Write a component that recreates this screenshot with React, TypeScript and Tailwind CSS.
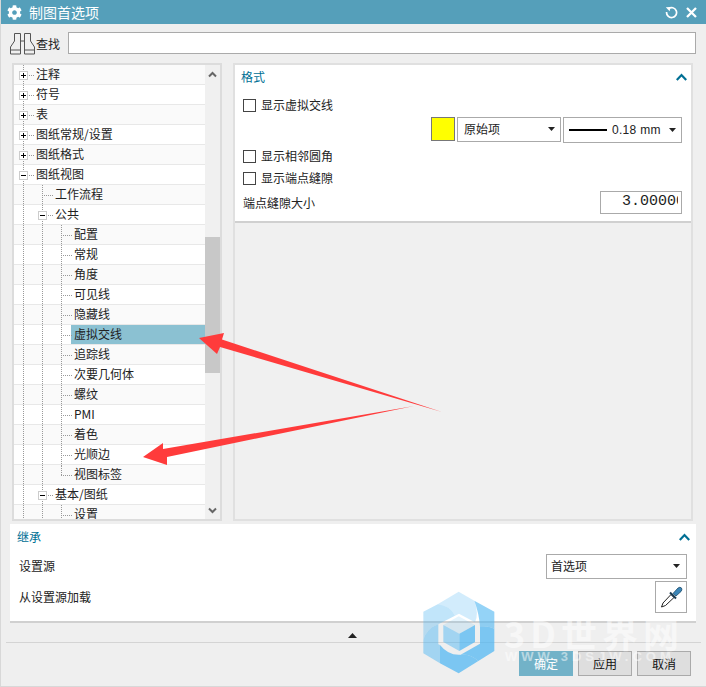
import { FaCog } from "react-icons/fa";

interface TreeRow {
  label: string;
  level: number;
  box?: "+" | "-";
  last?: boolean;
  selected?: boolean;
}

const rows: TreeRow[] = [
  { label: "注释", level: 0, box: "+" },
  { label: "符号", level: 0, box: "+" },
  { label: "表", level: 0, box: "+" },
  { label: "图纸常规/设置", level: 0, box: "+" },
  { label: "图纸格式", level: 0, box: "+" },
  { label: "图纸视图", level: 0, box: "-" },
  { label: "工作流程", level: 1 },
  { label: "公共", level: 1, box: "-" },
  { label: "配置", level: 2 },
  { label: "常规", level: 2 },
  { label: "角度", level: 2 },
  { label: "可见线", level: 2 },
  { label: "隐藏线", level: 2 },
  { label: "虚拟交线", level: 2, selected: true },
  { label: "追踪线", level: 2 },
  { label: "次要几何体", level: 2 },
  { label: "螺纹", level: 2 },
  { label: "PMI", level: 2 },
  { label: "着色", level: 2 },
  { label: "光顺边", level: 2 },
  { label: "视图标签", level: 2, last: true },
  { label: "基本/图纸", level: 1, box: "-" },
  { label: "设置", level: 2 },
];

function Guide({ active, row }: { active: boolean; row: TreeRow }) {
  return (
    <div className="relative h-full w-[19px] shrink-0">
      <div
        className={`ml-[9px] border-l border-dotted border-[#999] ${
          active && row.last ? "h-1/2" : "h-full"
        }`}
      />
      {active && (
        <div className="absolute left-[9px] top-[10px] w-[11px] border-t border-dotted border-[#999]" />
      )}
      {active && row.box && (
        <div className="absolute left-[5px] top-[6px] flex h-[9px] w-[9px] items-center justify-center border border-[#ccc] bg-white">
          <div className="relative h-px w-[5px] bg-black">
            {row.box === "+" && (
              <div className="absolute left-[2px] top-[-2px] h-[5px] w-px bg-black" />
            )}
          </div>
        </div>
      )}
    </div>
  );
}

function Tree() {
  return (
    <div className="flex h-[458px] w-[210px] shrink-0 border-2 border-[#dcdcdc] bg-white">
      <div className="w-[191px] overflow-hidden">
        {rows.map((row, i) => (
          <div
            key={i}
            className={`flex h-[20px] border-b border-[#e8e8e8] ${
              i % 2 === 0 ? "bg-[#fafafa]" : "bg-white"
            }`}
          >
            {Array.from({ length: row.level + 1 }).map((_, l) => (
              <Guide key={l} active={l === row.level} row={row} />
            ))}
            <div
              className={`flex h-full grow items-center pb-px pl-[3px] text-[12px] text-[#222] ${
                row.selected ? "bg-[#8bc1d2]" : ""
              }`}
            >
              {row.label}
            </div>
          </div>
        ))}
      </div>
      <div className="flex w-[15px] flex-col items-center bg-[#f0f0f0]">
        <svg width="9" height="7" viewBox="0 0 9 7" className="mt-[6px] shrink-0">
          <path d="M1 5.5 L4.5 2 L8 5.5" fill="none" stroke="#666" strokeWidth="2" />
        </svg>
        <div className="mt-[159px] h-[136px] w-full bg-[#c8c8c8]" />
        <svg width="9" height="7" viewBox="0 0 9 7" className="mt-[134px] shrink-0">
          <path d="M1 1.5 L4.5 5 L8 1.5" fill="none" stroke="#666" strokeWidth="2" />
        </svg>
      </div>
    </div>
  );
}

function Caret() {
  return (
    <svg width="7" height="4" viewBox="0 0 7 4" className="shrink-0">
      <path d="M0 0 H7 L3.5 4 Z" fill="#222" />
    </svg>
  );
}

function Chevron() {
  return (
    <svg width="11" height="8" viewBox="0 0 11 8">
      <path d="M0.8 7 L5.5 2 L10.2 7" fill="none" stroke="#006f94" strokeWidth="2.2" />
    </svg>
  );
}

function CheckRow({ label, className }: { label: string; className: string }) {
  return (
    <div className={`flex items-center gap-[5px] text-[12px] text-[#222] ${className}`}>
      <div className="h-[13px] w-[13px] border border-[#444] bg-white" />
      {label}
    </div>
  );
}

function Button({ label, primary }: { label: string; primary?: boolean }) {
  return (
    <div
      className={`flex h-[25px] w-[54px] items-center justify-center text-[12px] ${
        primary
          ? "bg-[#72b2c8] text-white"
          : "border border-[#aaa] bg-[#dedede] text-[#111]"
      }`}
    >
      {label}
    </div>
  );
}

function FormatPanel() {
  return (
    <div className="h-[458px] grow border-2 border-[#e0e0e0] bg-[#f0f0f0]">
      <div className="h-[158px] border-b-2 border-[#d0d0d0] bg-white pl-[8px] pr-[9px]">
        <div className="-ml-[2px] -mr-[5px] flex h-[24px] items-center justify-between text-[12px] text-[#006f94]">
          <span>格式</span>
          <Chevron />
        </div>
        <CheckRow label="显示虚拟交线" className="mt-[7px]" />
        <div className="mt-[3px] flex items-start justify-end">
          <div className="h-[24px] w-[24px] border border-[#777] bg-[#ffff00]" />
          <div className="ml-[2px] flex h-[25px] w-[104px] items-center justify-between border border-[#aaa] pb-px pl-[6px] pr-[5px] text-[12px] text-[#222]">
            原始项
            <Caret />
          </div>
          <div className="ml-[2px] flex h-[26px] w-[119px] items-center border border-[#aaa] pl-[5px] pr-[5px] text-[12px] text-[#222]">
            <div className="h-[2px] w-[38px] bg-black" />
            <span className="ml-[5px] grow font-['Liberation_Sans',sans-serif] tracking-[0.3px]">0.18 mm</span>
            <Caret />
          </div>
        </div>
        <CheckRow label="显示相邻圆角" className="mt-[4px]" />
        <CheckRow label="显示端点缝隙" className="mt-[4px]" />
        <div className="mt-[4px] flex items-center justify-between text-[12px] text-[#222]">
          端点缝隙大小
          <div className="flex h-[23px] w-[82px] items-center border border-[#aaa] font-['Liberation_Mono',monospace] text-[15px] text-[#222]">
            <div className="w-[77px] overflow-hidden pl-[21px]">
              <span className="whitespace-nowrap">3.00000</span>
            </div>
          </div>
        </div>
      </div>
    </div>
  );
}

function Watermark() {
  return (
    <div className="pointer-events-none absolute left-[414px] top-[585px] h-[95px] w-[276px]">
      <svg width="90" height="95" viewBox="0 0 270 285" className="absolute left-0 top-0">
        <path d="M68 58 L131 20 L178 47 Q192 85 180 112 L132 86 L120 92 Q105 62 68 58 Z" fill="#4db5f2" fillOpacity="0.25" />
        <path d="M178 47 L238 80 L238 132 Q222 122 195 124 Q192 85 178 47 Z" fill="#4db5f2" fillOpacity="0.6" />
        <path d="M238 132 L238 198 L190 228 Q165 205 137 209 L195 176 L195 124 Q222 122 238 132 Z" fill="#4db5f2" fillOpacity="0.72" />
        <path d="M190 228 L131 265 L75 235 L75 180 Q100 212 137 209 Q165 205 190 228 Z" fill="#4db5f2" fillOpacity="0.72" />
        <path d="M75 235 L25 205 L25 165 Q35 130 70 118 L70 178 L75 180 Z" fill="#4db5f2" fillOpacity="0.48" />
        <path d="M25 165 L25 80 L68 58 Q105 62 120 92 L70 118 Q35 130 25 165 Z" fill="#4db5f2" fillOpacity="0.35" />
        <path d="M85 120 L131 94 L180 120 L133 146 Z" fill="#4db5f2" fillOpacity="0.15" />
        <path d="M85 120 L133 146 V198 L85 171 Z" fill="#4db5f2" fillOpacity="0.48" />
        <path d="M180 120 L133 146 V198 L180 171 Z" fill="#4db5f2" fillOpacity="0.72" />
      </svg>
      <div className="absolute left-[89px] top-[29px] whitespace-nowrap text-[36px] font-bold leading-[36px] tracking-[5px] text-white/50">
        3D世界网
      </div>
      <div className="absolute left-[90px] top-[65px] whitespace-nowrap font-['Liberation_Sans',sans-serif] text-[13px] font-bold leading-[14px] tracking-[4px] text-white/50">
        WWW.3DSJW.COM
      </div>
    </div>
  );
}

export default function App() {
  return (
    <div
      className="relative flex h-[687px] w-[706px] flex-col overflow-hidden border-b border-l border-[#d8d8d8] bg-[#efefef] text-[#222]"
      style={{ fontFamily: '"Noto Sans CJK SC", "Liberation Sans", sans-serif' }}
    >
      {/* title */}
      <div className="-ml-px flex h-[24px] shrink-0 items-center bg-[#559fba] pl-[7px] pr-[9px] text-white">
        <FaCog className="h-[15px] w-[15px]" />
        <span className="ml-[7px] grow text-[14px]">制图首选项</span>
        <svg width="13" height="13" viewBox="0 0 13 13" className="mr-[8px]">
          <path d="M3.5 2.6 A5 5 0 1 1 1.6 6" fill="none" stroke="#fff" strokeWidth="1.7" />
          <path d="M0.8 1.2 L5.6 1 L4.6 5.2 Z" fill="#fff" />
        </svg>
        <svg width="11" height="11" viewBox="0 0 11 11">
          <path d="M1 1 L10 10 M10 1 L1 10" stroke="#fff" strokeWidth="2.3" />
        </svg>
      </div>

      {/* search */}
      <div className="flex h-[39px] shrink-0 items-start pl-[9px] pr-[10px] pt-[8px]">
        <svg width="25" height="22" viewBox="0 0 25 22" className="mt-[1px] shrink-0" fill="none" stroke="#555" strokeWidth="1">
          <path d="M4.5 .5 H10.5 V21 H0.5 V14 L4.5 8 Z M0.5 17 H10.5" />
          <path d="M14.5 .5 H20.5 V8 L24.5 14 V21 H14.5 Z M14.5 17 H24.5" />
          <path d="M10.5 8 H14.5" />
        </svg>
        <span className="ml-[1px] mt-[4px] text-[12px] leading-[16px]">查找</span>
        <div className="ml-[8px] h-[22px] grow border border-[#aaa] bg-white" />
      </div>

      {/* tree and format */}
      <div className="flex shrink-0 gap-[11px] pl-[11px] pr-[13px]">
        <Tree />
        <FormatPanel />
      </div>

      {/* inherit */}
      <div className="ml-[9px] mr-[10px] mt-[3px] h-[99px] shrink-0 border-b-2 border-[#d0d0d0] bg-white">
        <div className="flex h-[26px] items-center justify-between pl-[7px] pr-[6px] text-[12px] text-[#006f94]">
          <span>继承</span>
          <Chevron />
        </div>
        <div className="mt-[4px] flex items-center justify-between pl-[9px] pr-[9px] text-[12px]">
          <span className="pb-px">设置源</span>
          <div className="flex h-[25px] w-[141px] items-center justify-between border border-[#aaa] pb-px pl-[4px] pr-[6px]">
            首选项
            <Caret />
          </div>
        </div>
        <div className="mt-[2px] flex items-center justify-between pl-[9px] pr-[9px] text-[12px]">
          从设置源加载
          <div className="flex h-[32px] w-[32px] items-center justify-center border border-[#aaa]">
            <svg width="24" height="26" viewBox="0 0 24 26">
              <path d="M2.5 23 L4 19 L12 10.5 L15 13.5 L6.5 21.5 Z" fill="#fff" stroke="#222" strokeWidth="1" />
              <path d="M11 8.5 L17 14.5" stroke="#1a3a50" strokeWidth="2" />
              <path d="M14 9.5 L19 4 Q21 2.5 22.5 4 Q23.5 6 22 7.5 L17 12 Z" fill="#3b86b8" stroke="#1a4a6a" strokeWidth="0.8" />
            </svg>
          </div>
        </div>
      </div>

      {/* collapse toggle */}
      <div className="flex h-[19px] shrink-0 items-center justify-center pr-[2px] pt-[5px]">
        <svg width="9" height="5" viewBox="0 0 9 5">
          <path d="M0 5 L4.5 0 L9 5 Z" fill="#222" />
        </svg>
      </div>

      {/* actions */}
      <div className="ml-[5px] mr-[5px] flex shrink-0 justify-end gap-[5px] border-t border-[#d4d4d4] pr-[10px] pt-[8px]">
        <Button label="确定" primary />
        <Button label="应用" />
        <Button label="取消" />
      </div>

      <Watermark />

      {/* arrows */}
      <svg width="706" height="687" className="pointer-events-none absolute left-[-1px] top-0">
        <polygon points="199,338 224,333 222,339.5 442,412 220,347 217,354" fill="#ff3b3b" />
        <polygon points="143,457 163,443 163,449 414,406 167,457 167,465" fill="#ff3b3b" />
      </svg>
    </div>
  );
}
